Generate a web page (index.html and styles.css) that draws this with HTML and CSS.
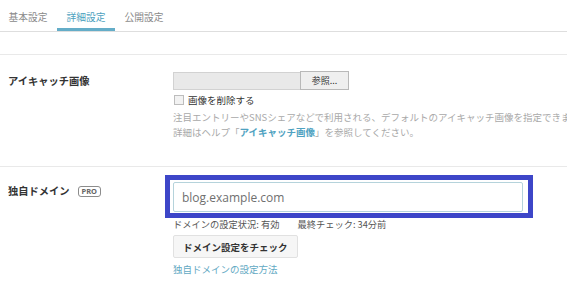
FILE: index.html
```html
<!DOCTYPE html>
<html lang="ja">
<head>
<meta charset="utf-8">
<title>詳細設定</title>
<link rel="stylesheet" href="styles.css">
</head>
<body>
<nav class="tabs">
  <a class="tab">基本設定</a>
  <a class="tab active">詳細設定</a>
  <a class="tab">公開設定</a>
</nav>

<section class="row row-eyecatch">
  <div class="label">アイキャッチ画像</div>
  <div class="control">
    <div class="file">
      <span class="file-name"></span>
      <button class="file-btn" type="button">参照...</button>
    </div>
    <label class="check"><input type="checkbox" class="cb"><span>画像を削除する</span></label>
    <p class="help">注目エントリーやSNSシェアなどで利用される、デフォルトのアイキャッチ画像を指定できます。</p>
    <p class="help">詳細はヘルプ「<a class="help-link">アイキャッチ画像</a>」を参照してください。</p>
  </div>
</section>

<section class="row row-domain">
  <div class="label">独自ドメイン<span class="pro">PRO</span></div>
  <div class="control">
    <div class="input-wrap">
      <input class="text-input" type="text" value="blog.example.com">
      <span class="highlight"></span>
    </div>
    <p class="status">ドメインの設定状況: 有効<span class="status-gap">最終チェック: 34分前</span></p>
    <button class="check-btn" type="button">ドメイン設定をチェック</button>
    <a class="how-link">独自ドメインの設定方法</a>
  </div>
</section>
</body>
</html>
```

FILE: styles.css
```css
html, body {
  margin: 0;
  padding: 0;
  overflow: hidden;
  background: #fff;
}
body {
  font-family: "Noto Sans CJK JP", "Noto Sans", sans-serif;
  color: #444;
  font-size: 9.5px;
}
p { margin: 0; }

.tabs {
  display: flex;
  border-bottom: 1px solid #dedede;
  margin: 0 0 22px -1px;
}
.tab {
  padding: 10px 9.5px 4px;
  line-height: 14px;
  font-size: 9.75px;
  color: #8a8a8a;
  border-bottom: 3px solid transparent;
}
.tab.active {
  color: #4c9fbe;
  border-bottom-color: #64adc8;
}

.row {
  display: grid;
  grid-template-columns: 165px 1fr;
  padding-left: 8px;
  border-top: 1px solid #e9e9e9;
}
.label {
  font-weight: bold;
  font-size: 10.25px;
  color: #333;
  line-height: 18px;
  display: flex;
  align-items: center;
  align-self: start;
}

.row-eyecatch { padding: 17px 0 26px 8px; }
.row-domain { padding: 15px 0 30px 8px; }

.file {
  display: flex;
  height: 18px;
}
.file-name {
  width: 126px;
  background: #e9e9e9;
  border: 1px solid #d2d2d2;
  border-right: none;
}
.file-btn {
  width: 49px;
  height: 19px;
  margin-top: -1px;
  background: #efefef;
  border: 1px solid #b9b9b9;
  font-family: inherit;
  font-size: 9px;
  color: #333;
  padding: 0;
}

.check {
  display: flex;
  align-items: center;
  gap: 4px;
  margin-top: 3px;
  line-height: 14px;
  color: #333;
  padding-left: 1px;
}
.cb {
  appearance: none;
  -webkit-appearance: none;
  width: 10px;
  height: 10px;
  margin: 0;
  border: 1px solid #bdbdbd;
  background: #f2f2f2;
}

.help {
  color: #a9a9a9;
  line-height: 15px;
  white-space: nowrap;
}
.check + .help { margin-top: 3px; }
.help-link {
  color: #4fa2c1;
  font-weight: bold;
}

.input-wrap {
  position: relative;
  width: 350px;
}
.text-input {
  display: block;
  box-sizing: border-box;
  width: 350px;
  height: 30px;
  margin: 0;
  padding: 0 8px;
  border: 1px solid #b5d3db;
  border-radius: 2px;
  font-family: "Open Sans", "Noto Sans", sans-serif;
  font-size: 12px;
  color: #6f6f6f;
  background: #fff;
}
.highlight {
  position: absolute;
  left: -8px;
  top: -7px;
  right: -10px;
  bottom: -6px;
  border: 5px solid #3d46c8;
  pointer-events: none;
}

.status {
  margin-top: 5px;
  line-height: 14px;
  font-size: 9.25px;
  color: #555;
}
.status-gap { margin-left: 18px; }

.check-btn {
  display: block;
  margin-top: 4px;
  height: 23px;
  padding: 0 9px;
  background: #f6f6f6;
  border: 1px solid #e1e1e1;
  border-radius: 2px;
  font-family: inherit;
  font-weight: bold;
  font-size: 9.5px;
  color: #333;
}
.how-link {
  display: block;
  margin-top: 4px;
  line-height: 14px;
  color: #62a9c3;
}

.pro {
  display: inline-block;
  margin-left: 8px;
  padding: 0 3px;
  border: 1px solid #8c8c8c;
  border-radius: 3px;
  font-family: "Noto Sans", sans-serif;
  font-size: 7.5px;
  line-height: 9px;
  color: #666;
  font-weight: bold;
}
```
